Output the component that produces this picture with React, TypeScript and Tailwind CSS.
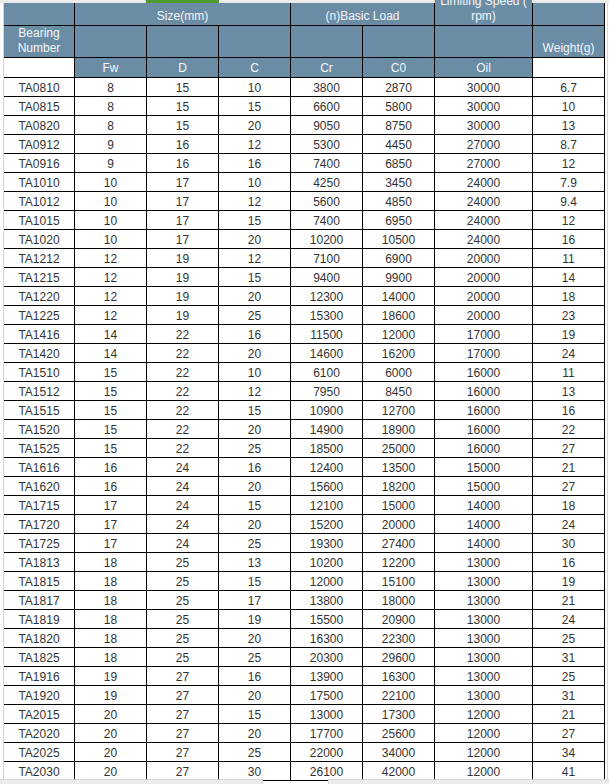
import React from 'react';

// ── Data ─────────────────────────────────────────────────────────────────────
type Row = [string, number, number, number, number, number, number, string];

const ROWS: Row[] = [
  ['TA0810', 8, 15, 10, 3800, 2870, 30000, '6.7'],
  ['TA0815', 8, 15, 15, 6600, 5800, 30000, '10'],
  ['TA0820', 8, 15, 20, 9050, 8750, 30000, '13'],
  ['TA0912', 9, 16, 12, 5300, 4450, 27000, '8.7'],
  ['TA0916', 9, 16, 16, 7400, 6850, 27000, '12'],
  ['TA1010', 10, 17, 10, 4250, 3450, 24000, '7.9'],
  ['TA1012', 10, 17, 12, 5600, 4850, 24000, '9.4'],
  ['TA1015', 10, 17, 15, 7400, 6950, 24000, '12'],
  ['TA1020', 10, 17, 20, 10200, 10500, 24000, '16'],
  ['TA1212', 12, 19, 12, 7100, 6900, 20000, '11'],
  ['TA1215', 12, 19, 15, 9400, 9900, 20000, '14'],
  ['TA1220', 12, 19, 20, 12300, 14000, 20000, '18'],
  ['TA1225', 12, 19, 25, 15300, 18600, 20000, '23'],
  ['TA1416', 14, 22, 16, 11500, 12000, 17000, '19'],
  ['TA1420', 14, 22, 20, 14600, 16200, 17000, '24'],
  ['TA1510', 15, 22, 10, 6100, 6000, 16000, '11'],
  ['TA1512', 15, 22, 12, 7950, 8450, 16000, '13'],
  ['TA1515', 15, 22, 15, 10900, 12700, 16000, '16'],
  ['TA1520', 15, 22, 20, 14900, 18900, 16000, '22'],
  ['TA1525', 15, 22, 25, 18500, 25000, 16000, '27'],
  ['TA1616', 16, 24, 16, 12400, 13500, 15000, '21'],
  ['TA1620', 16, 24, 20, 15600, 18200, 15000, '27'],
  ['TA1715', 17, 24, 15, 12100, 15000, 14000, '18'],
  ['TA1720', 17, 24, 20, 15200, 20000, 14000, '24'],
  ['TA1725', 17, 24, 25, 19300, 27400, 14000, '30'],
  ['TA1813', 18, 25, 13, 10200, 12200, 13000, '16'],
  ['TA1815', 18, 25, 15, 12000, 15100, 13000, '19'],
  ['TA1817', 18, 25, 17, 13800, 18000, 13000, '21'],
  ['TA1819', 18, 25, 19, 15500, 20900, 13000, '24'],
  ['TA1820', 18, 25, 20, 16300, 22300, 13000, '25'],
  ['TA1825', 18, 25, 25, 20300, 29600, 13000, '31'],
  ['TA1916', 19, 27, 16, 13900, 16300, 13000, '25'],
  ['TA1920', 19, 27, 20, 17500, 22100, 13000, '31'],
  ['TA2015', 20, 27, 15, 13000, 17300, 12000, '21'],
  ['TA2020', 20, 27, 20, 17700, 25600, 12000, '27'],
  ['TA2025', 20, 27, 25, 22000, 34000, 12000, '34'],
  ['TA2030', 20, 27, 30, 26100, 42000, 12000, '41'],
];

const GRID = 'grid grid-cols-[71px_72px_72px_72px_72px_72px_98px_72px]';
const HEAD = 'bg-[#6b8ca5] text-[#f4f6f8] border-r border-b border-black flex items-end justify-center text-center leading-[15px] pb-[1px]';

export default function App() {
  return (
    <div className="relative w-[609px] h-[784px] overflow-hidden bg-white font-['Liberation_Sans',Arial,sans-serif] text-[12px]">
      {/* ── Column strip above (sheet row, mostly hidden) ── */}
      <div className="flex h-[3px] bg-[#ebebeb]">
        <div className="w-[146px] border-r border-[#d4d4d4]" />
        <div className="w-[73px] bg-[#4f9a2f]" />
        <div className="w-[216px] border-r border-[#d4d4d4]" />
        <div className="w-[97px] bg-[#6b8ca5]" />
        <div className="flex-1" />
      </div>

      <div className="flex">
        {/* left gutter */}
        <div className="w-[4px] border-r border-[#d4d4d4] bg-white" />

        <div className="w-[601px]">
          {/* ── Header ── */}
          <div className={`${GRID} grid-rows-[23px_32px_20px]`}>
            <div className={HEAD} />
            <div className={`${HEAD} col-span-3`}>Size(mm)</div>
            <div className={`${HEAD} col-span-2`}>(n)Basic Load</div>
            <div className={`${HEAD} overflow-visible relative`}>
              <span className="block">
                Limiting Speed (
                <br />
                rpm)
              </span>
            </div>
            <div className={HEAD} />

            <div className={`${HEAD} pb-[0px]`}>
              Bearing
              <br />
              Number
            </div>
            <div className={HEAD} />
            <div className={HEAD} />
            <div className={HEAD} />
            <div className={HEAD} />
            <div className={HEAD} />
            <div className={HEAD} />
            <div className={HEAD}>Weight(g)</div>

            <div className="bg-white border-r border-b border-black" />
            {['Fw', 'D', 'C', 'Cr', 'C0', 'Oil'].map((h) => (
              <div key={h} className={HEAD}>{h}</div>
            ))}
            <div className="bg-white border-r border-b border-black" />
          </div>

          {/* ── Rows ── */}
          {ROWS.map((r) => (
            <div key={r[0]} className={`${GRID} h-[19px] text-[#333333]`}>
              {r.map((v, i) => (
                <div
                  key={i}
                  className="border-r border-b border-black flex items-center justify-center leading-[14px] pt-[1px]"
                >
                  {v}
                </div>
              ))}
            </div>
          ))}
        </div>

        {/* right gutter */}
        <div className="flex-1 flex justify-end pr-[1px]">
          <div className="w-[1px] bg-[#d8d8d8]" />
        </div>
      </div>

      {/* ── Scroll bars over the sheet bottom ── */}
      <div className="absolute left-0 bottom-0 w-[263px] h-[5px] bg-[#ececec] border-t border-r border-[#d6d6d6]" />
      <div className="absolute right-0 bottom-0 w-[281px] h-[5px] bg-[#ececec] border-t border-l border-[#d6d6d6]" />
    </div>
  );
}
